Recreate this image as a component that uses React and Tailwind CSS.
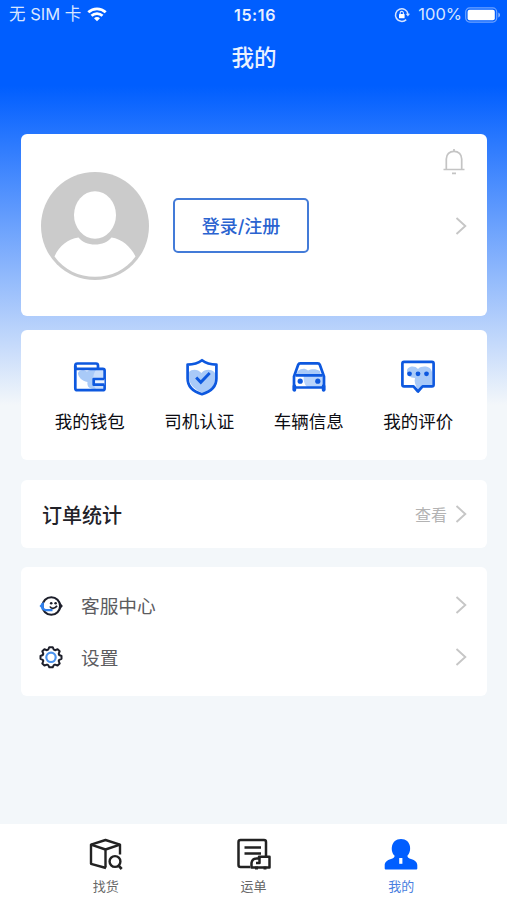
import React from "react";
import clsx from "clsx";

const WifiIcon = () => (
  <svg className="w-5 h-[15px]" viewBox="0 0 20 15" fill="none" stroke="white" strokeWidth={2.8}>
    <path d="M1.3 5.3C6.2 0.6 13.8 0.6 18.7 5.3" />
    <path d="M4.5 8.7C7.6 5.8 12.4 5.8 15.5 8.7" />
    <path d="M10 14.2L7 11.2C8.7 9.7 11.3 9.7 13 11.2Z" fill="white" stroke="none" />
  </svg>
);

const RotationLockIcon = () => (
  <svg className="w-4 h-4" viewBox="0 0 16 16" fill="none" stroke="#d6e4ff" strokeWidth={1.5}>
    <path d="M12.2 12.6A6.3 6.3 0 1 1 14 7" />
    <path d="M11.7 6.8H16L13.9 9.6Z" fill="#d6e4ff" stroke="none" />
    <rect x="5" y="7" width="5.6" height="4.3" rx="0.6" fill="white" stroke="none" />
    <path d="M6.2 7V6A1.6 1.6 0 0 1 9.4 6V7" strokeWidth={1.1} />
  </svg>
);

const BatteryIcon = () => (
  <svg className="w-9 h-4" viewBox="0 0 36 16" fill="none">
    <rect x="0.7" y="0.9" width="31" height="14.2" rx="4" stroke="#6ea3ff" strokeWidth={1.2} />
    <rect x="2.6" y="2.8" width="27.2" height="10.4" rx="2" fill="white" />
    <path d="M33.3 5.5C35.6 6.3 35.6 9.7 33.3 10.5Z" fill="#8db6ff" />
  </svg>
);

const Avatar = () => (
  <svg className="mt-0.5 w-[108px] h-[108px]" viewBox="0 0 108 108">
    <circle cx="54" cy="54" r="54" fill="#cbcbcb" />
    <path d="M13.5 84.5C18 74 27 67 37.5 65.5C41 70 47 72.5 54 72.5C61 72.5 67 70 70.5 65.5C81 67 90 75 94.5 84.5C85 98 70 104.8 54 104.8C38 104.8 23 98 13.5 84.5Z" fill="white" />
    <ellipse cx="54" cy="43" rx="21" ry="23.7" fill="white" />
  </svg>
);

const BellIcon = () => (
  <svg className="w-6 h-7" viewBox="0 0 24 28" fill="none" stroke="#c4c4c4" strokeWidth={1.7}>
    <path d="M0.5 21.5H21.5M3.3 21.2V11C3.3 6.5 6.5 3.3 11 3.3C15.5 3.3 18.7 6.5 18.7 11V21.2" />
    <path d="M11 1V3.5M9 25.3H13" />
  </svg>
);

const Chevron = () => (
  <svg className="w-3 h-[18px]" viewBox="0 0 12 18" fill="none" stroke="#c6c6c6" strokeWidth={1.9}>
    <path d="M1.5 1L10.3 9L1.5 17" />
  </svg>
);

const WalletIcon = () => (
  <svg className="w-10 h-10" viewBox="0 0 40 40" fill="none" stroke="#0d58df" strokeWidth={2.7} strokeLinejoin="round">
    <path d="M8 16C9 12.5 14 12.5 17 14.5C20 12 28 12.5 33 15V32H24C18 32 17 28 17.5 25C12 24 8 20 8 16Z" fill="#a9caf8" stroke="none" />
    <path d="M33 12V32H26C22 28 22 16 27 12Z" fill="#c9defc" stroke="none" />
    <path d="M5.3 11.5V8.5Q5.3 6.5 7.4 6.5H26Q28 6.5 28 8.5V11.5" />
    <path d="M5.3 11.8H32.8Q34.6 11.8 34.6 13.5V31.4Q34.6 33.2 32.8 33.2H7.3Q5.3 33.2 5.3 31.2V9" />
    <path d="M34.5 22H23.7V27.7H34.5" fill="#e9f2ff" />
  </svg>
);

const ShieldIcon = () => (
  <svg className="w-10 h-10" viewBox="0 0 40 40" fill="none" stroke="#0d58df" strokeWidth={2.7}>
    <path d="M10 15C13 11.5 19 12 22.5 16C26 11.5 33 12 36 16V24C35 30 30 34 24 36C16 33 11 28 10 22Z" fill="#a9caf8" stroke="none" />
    <path d="M23 3.2C27 6.3 32 7.5 37.4 7.6V21.5C37.4 30 30.5 35 23 37.2C15.500 35 8.600 30 8.600 21.5V7.6C14 7.5 19 6.3 23 3.2Z" strokeLinejoin="round" />
    <path d="M17.2 20.5L21.8 25.3L30.7 16" strokeWidth={2.9} />
  </svg>
);

const CarIcon = () => (
  <svg className="w-10 h-10" viewBox="0 0 40 40" fill="none" stroke="#0d58df" strokeWidth={2.7} strokeLinejoin="round">
    <path d="M9 14C12 11.5 16 11 19 13.5C22 12 27 11.5 31 14L32 18H7Z" fill="#a9caf8" stroke="none" />
    <path d="M15 18.5H35V30H18C15 27 14 22 15 18.5Z" fill="#b9d4fb" stroke="none" />
    <path d="M5 33.5V19.5L9.2 7.7Q9.7 6.3 11.2 6.3H28.8Q30.3 6.3 30.8 7.7L35 19.5V33.5" />
    <path d="M5 30.5H35M6.5 18.3H33.5" />
    <path d="M5.4 29V33M34.6 29V33" strokeWidth={3.6} strokeLinecap="round" />
    <circle cx="11.2" cy="24.2" r="2.6" fill="#0d58df" stroke="none" />
    <circle cx="28.8" cy="24.2" r="2.6" fill="#0d58df" stroke="none" />
  </svg>
);

const CommentIcon = () => (
  <svg className="w-10 h-10" viewBox="0 0 40 40" fill="none" stroke="#0d58df" strokeWidth={2.7} strokeLinejoin="round">
    <path d="M9 14C9 9 17 8 20 12C24 8 33 9 34 15V28H24L20 33C17 28 16 24 17 21C12 21 9 18 9 14Z" fill="#a9caf8" stroke="none" />
    <path d="M6 4.8H34Q35.6 4.8 35.6 6.4V27.7Q35.6 29.3 34 29.3H24.5L20 34.5L15.5 29.3H6Q4.4 29.3 4.4 27.7V6.4Q4.4 4.8 6 4.8Z" />
    <g fill="#0d58df" stroke="none">
      <circle cx="11.5" cy="16.8" r="2.4" />
      <circle cx="20" cy="16.8" r="2.4" />
      <circle cx="28.5" cy="16.8" r="2.4" />
    </g>
  </svg>
);

const ServiceIcon = () => (
  <svg className="w-6 h-6" viewBox="0 0 24 24" fill="none">
    <circle cx="12.3" cy="12" r="8.8" stroke="#1d1f2b" strokeWidth={2.1} />
    <path d="M4.6 7.5L0.5 12L4.6 16.5Z" fill="#2f80ee" />
    <path d="M20 7L23.8 12L20 17Z" fill="#1d1f2b" />
    <path d="M3.5 9V14.5L6.5 16.2H13.5" stroke="#2f80ee" strokeWidth={2.3} />
    <path d="M11 12.5C12 15 16 15.2 18 11.8" stroke="#1d1f2b" strokeWidth={1.7} />
    <circle cx="12.2" cy="9.3" r="1.3" fill="#1d1f2b" />
    <circle cx="16.6" cy="9.3" r="1.3" fill="#1d1f2b" />
  </svg>
);

const SettingIcon = () => (
  <svg className="w-6 h-6" viewBox="0 0 24 24" fill="none" strokeLinejoin="round">
    <path
      d="M10.3 2.2H13.700L14.8 4.700L16 5.200L18.600 4.300L20.700 6.200L19.700 8.800L20.200 10L22.500 11V13.800L20.200 14.800L19.700 16L20.700 18.600L18.600 20.500L16 19.600L14.800 20.100L13.700 22.300H10.300L9.200 20.100L8 19.600L5.400 20.500L3.300 18.600L4.300 16L3.800 14.800L1.500 13.800V11L3.800 10L4.300 8.800L3.300 6.200L5.400 4.300L8 5.200L9.200 4.700Z"
      stroke="#1d1f2b"
      strokeWidth={2}
    />
    <circle cx="12" cy="12.300" r="4.700" stroke="#4b93ee" strokeWidth={2.2} />
  </svg>
);

const BoxSearchIcon = () => (
  <svg className="w-9 h-9" viewBox="0 0 36 36" fill="none" stroke="#222" strokeWidth={2.4} strokeLinejoin="round">
    <path d="M18 31L3 26.8V7.6L17.5 3L32 7.6V17.5" />
    <path d="M3 7.6L17.5 12.5L32 7.6M17.5 12.5V30.500" />
    <circle cx="27" cy="24.5" r="5.400" />
    <path d="M30.5 28.5L33.7 32" strokeWidth={2.6} />
  </svg>
);

const WaybillIcon = () => (
  <svg className="w-9 h-9" viewBox="0 0 36 36" fill="none" stroke="#222" strokeWidth={2.5} strokeLinejoin="round">
    <path d="M15 30H5.500Q3.500 30 3.500 28V5Q3.500 3 5.500 3H29Q31 3 31 5V19" />
    <path d="M9.500 10.500H26M9.500 16.500H26" />
    <path d="M16.500 30V26C17 23 18.500 21.500 21.500 21.500H24V19.800H34.500V30.500H16.500Z" fill="white" />
    <path d="M24.500 20V26H21" />
    <path d="M21.500 29.500V32.500M30 29.500V32.500" strokeWidth={3} />
  </svg>
);

const UserIcon = () => (
  <svg className="w-9 h-9" viewBox="0 0 36 36" fill="#005eff">
    <path d="M11.500 18.500C7 14.500 7.500 2 18 2C28.500 2 29 14.500 24.500 18.500C24 20.500 26 21.500 28 22C32 23.200 34.300 25 34.300 28.500V31.500Q34.300 32.500 33.300 32.500H2.700Q1.700 32.500 1.700 31.500V28.500C1.700 25 4 23.200 8 22C10 21.500 12 20.500 11.500 18.500Z" />
    <rect x="16.200" y="21" width="3.200" height="5.800" fill="white" />
  </svg>
);

const shortcuts = [
  { label: "我的钱包", Icon: WalletIcon },
  { label: "司机认证", Icon: ShieldIcon },
  { label: "车辆信息", Icon: CarIcon },
  { label: "我的评价", Icon: CommentIcon },
];

const menu = [
  { label: "客服中心", Icon: ServiceIcon },
  { label: "设置", Icon: SettingIcon },
];

const tabs = [
  { label: "找货", Icon: BoxSearchIcon },
  { label: "运单", Icon: WaybillIcon },
  { label: "我的", Icon: UserIcon, active: true },
];

const StatusBar = () => (
  <div className="h-[29px] pl-[9px] pr-1.5 grid grid-cols-[1fr_auto_1fr] items-center text-[#d9e6ff] text-[16.500px]">
    <div className="flex items-center gap-1.5">
      <span className="whitespace-nowrap">无 SIM 卡</span>
      <WifiIcon />
    </div>
    <span className="font-semibold text-base tracking-[0.600px] text-[#eaf1ff]">15:16</span>
    <div className="flex items-center justify-end">
      <RotationLockIcon />
      <span className="ml-2 mr-[3px]">100%</span>
      <BatteryIcon />
    </div>
  </div>
);

export default function App() {
  return (
    <div className="w-full h-[900px] flex flex-col overflow-hidden bg-[linear-gradient(180deg,#005eff_0px,#005eff_86px,#f3f7fa_405px)] font-['Inter','Noto_Sans_CJK_SC',sans-serif]">
      <StatusBar />
      <h1 className="h-[105px] pt-[13px] pl-px text-center text-[22.500px] leading-8 font-medium text-[#eaf2ff]">我的</h1>

      <main className="flex-1 pl-[21px] pr-5">
        <section className="h-[182px] rounded-md bg-white px-5 flex items-center">
          <Avatar />
          <button className="ml-6 w-[136px] h-[55px] pt-1 rounded-[5px] border-2 border-[#437bd8] text-lg font-medium text-[#2a63d0]">登录/注册</button>
          <div className="ml-auto self-stretch flex flex-col items-end pt-3.5">
            <BellIcon />
            <div className="mt-[41px]">
              <Chevron />
            </div>
          </div>
        </section>

        <section className="mt-3.5 h-[130px] rounded-md bg-white px-3.5 pt-[27px] grid grid-cols-4">
          {shortcuts.map(({ label, Icon }) => (
            <div key={label} className="flex flex-col items-center">
              <Icon />
              <span className="mt-[11px] text-[17.500px] leading-7 text-[#0c0c12]">{label}</span>
            </div>
          ))}
        </section>

        <section className="mt-5 h-[68px] rounded-md bg-white px-5 flex items-center">
          <h2 className="pt-[3px] pl-px text-xl font-medium text-[#222228]">订单统计</h2>
          <span className="ml-auto mr-2 pt-0.5 text-base text-[#b3b3b3]">查看</span>
          <Chevron />
        </section>

        <section className="mt-[19px] h-[129px] rounded-md bg-white pl-[18px] pr-5 pt-[13px]">
          {menu.map(({ label, Icon }) => (
            <div key={label} className="h-[51.500px] flex items-center">
              <Icon />
              <span className="ml-[18px] pt-[3px] text-[18.700px] text-[#5c5c5f]">{label}</span>
              <div className="ml-auto -mt-px">
                <Chevron />
              </div>
            </div>
          ))}
        </section>
      </main>

      <nav className="h-[76px] bg-white px-8 pt-[13px] grid grid-cols-3">
        {tabs.map(({ label, Icon, active }) => (
          <div key={label} className="flex flex-col items-center">
            <Icon />
            <span className={clsx("mt-[3px] text-[13px] leading-5", active ? "text-[#4a7fe0]" : "text-[#666]")}>{label}</span>
          </div>
        ))}
      </nav>
    </div>
  );
}
